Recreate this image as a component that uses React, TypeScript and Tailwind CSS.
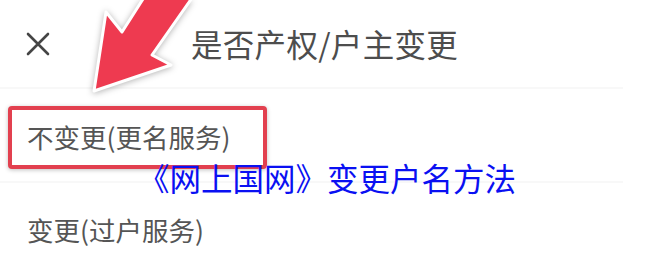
import React from 'react';

const font = '"Noto Sans CJK SC", "Noto Sans", sans-serif';

const CloseIcon: React.FC = () => (
  <svg width="24" height="24" viewBox="0 0 24 24" className="shrink-0">
    <path d="M2 2 L22 22 M22 2 L2 22" stroke="#454545" strokeWidth="2.6" strokeLinecap="round" />
  </svg>
);

// red call-out arrow pasted on top of the screenshot
const Arrow: React.FC = () => (
  <svg
    width="650"
    height="110"
    viewBox="0 0 650 110"
    className="absolute left-0 top-0 pointer-events-none drop-shadow-[0_1px_3px_rgba(0,0,0,0.3)]"
  >
    <polygon
      points="94,91 106,12 122,32 150,-12 199,-12 152,55 171,65"
      fill="#ee3a50"
      stroke="#ffffff"
      strokeWidth="3"
      strokeLinejoin="round"
    />
  </svg>
);

export default function App() {
  return (
    <div
      className="relative w-[650px] h-[260px] overflow-hidden bg-white"
      style={{ fontFamily: font }}
    >
      {/* header */}
      <div className="flex items-center h-[89px] pl-[26px] border-b-[2px] border-[#f8f8f8] mr-[27px]">
        <CloseIcon />
        <span className="ml-[141px] text-[31.5px] tracking-[0.3px] leading-none text-[#4d4d4d]">是否产权/户主变更</span>
      </div>

      {/* option 1 */}
      <div className="h-[94px] pt-[17px] pl-[8px] border-b-[2px] border-[#f8f8f8] mr-[27px]">
        <div className="flex items-center w-[259px] h-[63px] pl-[15px] border-[4px] border-[#e2404f] rounded-[4px] shadow-[0_1px_4px_rgba(0,0,0,0.25)] bg-white">
          <span className="text-[26.5px] leading-none text-[#555555]">不变更(更名服务)</span>
        </div>
      </div>

      {/* option 2 */}
      <div className="pt-[34px] pl-[27px]">
        <span className="text-[26.5px] leading-none text-[#555555]">变更(过户服务)</span>
      </div>

      <Arrow />

      {/* caption overlay */}
      <div className="absolute left-[138px] top-[162px] text-[31.5px] leading-none text-[#0a10f2] whitespace-nowrap">
        《网上国网》变更户名方法
      </div>
    </div>
  );
}
